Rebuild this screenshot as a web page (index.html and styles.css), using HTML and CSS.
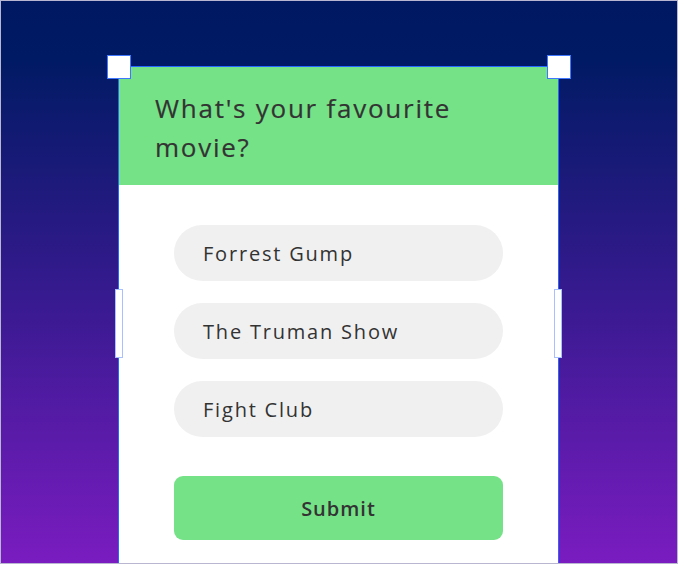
FILE: index.html
```html
<!DOCTYPE html>
<html lang="en">
<head>
<meta charset="utf-8">
<title>Favourite movie</title>
<link rel="stylesheet" href="styles.css">
</head>
<body>
<div class="stage">
  <div class="card">
    <div class="card-header">
      <h1 class="question">What's your favourite movie?</h1>
    </div>
    <div class="card-body">
      <div class="options">
        <div class="option">Forrest Gump</div>
        <div class="option">The Truman Show</div>
        <div class="option">Fight Club</div>
      </div>
      <button class="submit" type="button">Submit</button>
    </div>
    <span class="handle corner tl"></span>
    <span class="handle corner tr"></span>
    <span class="handle side sl"></span>
    <span class="handle side sr"></span>
  </div>
</div>
</body>
</html>
```

FILE: styles.css
```css
html, body {
  margin: 0;
  padding: 0;
}

body {
  width: 678px;
  height: 564px;
  overflow: hidden;
  font-family: "Open Sans", "Liberation Sans", sans-serif;
  color: #333333;
}

.stage {
  box-sizing: border-box;
  width: 678px;
  height: 564px;
  overflow: hidden;
  border: 1px solid #b9b6d2;
  padding: 65px 0 0 117px;
  background: linear-gradient(to bottom, #001862 0%, #001a64 10%, #3a1a92 55%, #7a1cc0 100%);
}

.card {
  position: relative;
  box-sizing: border-box;
  width: 441px;
  height: 520px;
  border: 1px solid #2468ff;
  background: #ffffff;
}

.card-header {
  background: #76e288;
  height: 118px;
  box-sizing: border-box;
  padding: 22px 36px 0 36px;
}

.question {
  margin: 0;
  max-width: 340px;
  font-size: 26px;
  font-weight: 400;
  line-height: 39px;
  letter-spacing: 1.75px;
  color: #333333;
  -webkit-text-stroke: 0.2px #333333;
}

.card-body {
  padding: 40px 55px 0 55px;
  display: flex;
  flex-direction: column;
  gap: 39px;
}

.options {
  display: flex;
  flex-direction: column;
  gap: 22px;
}

.option {
  height: 56px;
  border-radius: 28px;
  background: #f0f0f0;
  display: flex;
  align-items: center;
  padding-left: 29px;
  font-size: 20px;
  letter-spacing: 1.8px;
  color: #333333;
}

.submit {
  height: 64px;
  border: none;
  border-radius: 9px;
  background: #76e288;
  font-family: inherit;
  font-size: 20px;
  font-weight: 600;
  letter-spacing: 1px;
  color: #333333;
  padding: 0;
}

.handle {
  position: absolute;
  box-sizing: border-box;
  background: #ffffff;
}

.corner {
  width: 24px;
  height: 24px;
  border: 1px solid #3f78ff;
  top: -12px;
}

.tl { left: -12px; }
.tr { left: 428px; }

.side {
  width: 8px;
  height: 69px;
  top: 222px;
  border: 1px solid #a9c0ff;
}

.sl { left: -4px; }
.sr { left: 435px; }
```
